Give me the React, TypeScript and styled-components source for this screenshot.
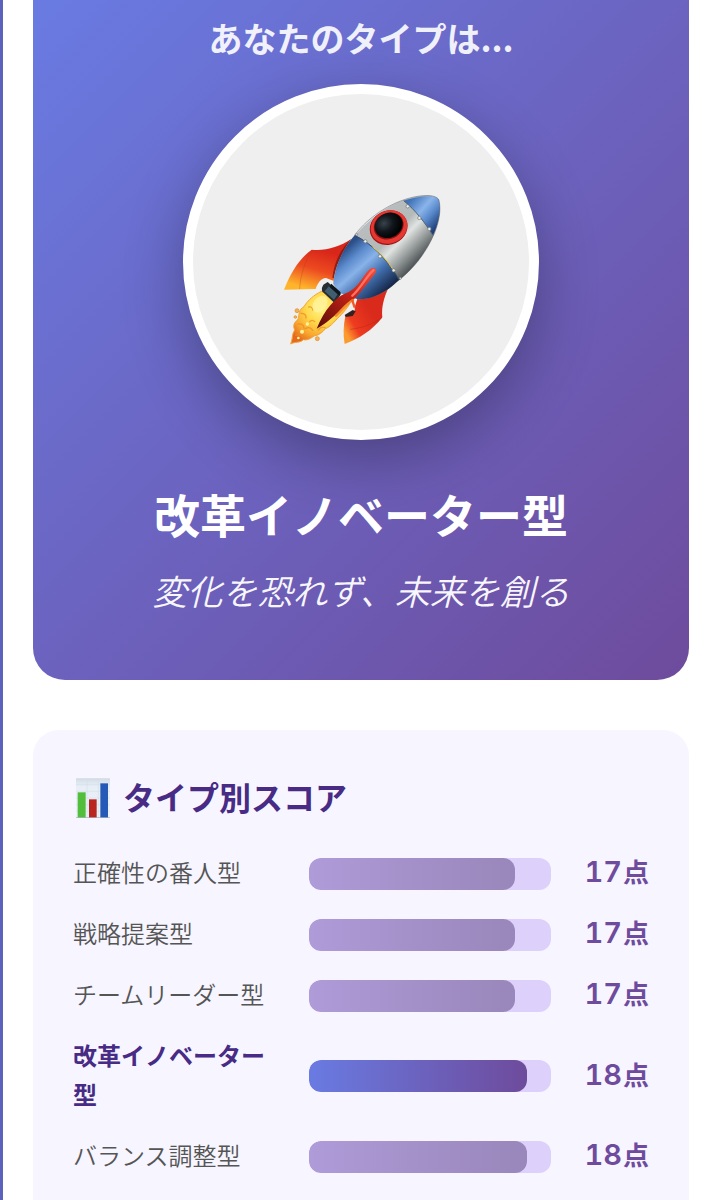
import React from "react";
import styled, { createGlobalStyle } from "styled-components";

const GlobalStyle = createGlobalStyle`
  *, *::before, *::after { box-sizing: border-box; }
  body {
    margin: 0;
    background: #5d62ba;
    font-family: "Noto Sans CJK JP", sans-serif;
  }
`;

const Page = styled.main`
  margin-left: 3px;
  min-height: 100vh;
  padding: 0 17px 0 30px;
  background: #fff;
  overflow: hidden;
`;

const Hero = styled.section`
  display: flex;
  flex-direction: column;
  align-items: center;
  padding: 14px 40px 64px;
  border-radius: 0 0 32px 32px;
  background: linear-gradient(135deg, #697be2 0%, #6e4b9c 100%);
  color: #fff;
  text-align: center;
`;

const Lead = styled.p`
  margin: 0 0 22px;
  font-size: 34px;
  line-height: 48px;
  font-weight: 700;
  opacity: 0.9;
`;

const Medallion = styled.div`
  display: grid;
  place-items: center;
  width: 356px;
  height: 356px;
  border: 10px solid #fff;
  border-radius: 50%;
  background: #efefef;
  box-shadow: 0 20px 60px rgba(0, 0, 0, 0.3);
`;

const TypeName = styled.h1`
  margin: 38px 0 16px;
  font-size: 46px;
  line-height: 70px;
  font-weight: 700;
`;

const Tagline = styled.p`
  margin: 0;
  font-size: 35px;
  line-height: 52px;
  font-weight: 350;
  font-style: italic;
  opacity: 0.95;
`;

const ScoreCard = styled.section`
  margin-top: 50px;
  padding: 40px 40px 48px;
  border-radius: 26px;
  background: #f7f5ff;
`;

const CardTitle = styled.h2`
  display: flex;
  align-items: center;
  gap: 10px;
  margin: 0 0 26px;
  color: #472b85;
  font-size: 32px;
  line-height: 52px;
  font-weight: 700;
`;

const TitleText = styled.span`
  padding-bottom: 4px;
`;

const ScoreList = styled.ul`
  display: flex;
  flex-direction: column;
  gap: 18px;
  margin: 0;
  padding: 0;
  list-style: none;
`;

const ScoreRow = styled.li`
  display: flex;
  align-items: center;
  gap: 24px;
  line-height: 39px;
`;

const Label = styled.span<{ $active?: boolean }>`
  flex: 0 0 212px;
  padding-bottom: 4px;
  font-size: 24px;
  font-weight: ${(p) => (p.$active ? 700 : 350)};
  color: ${(p) => (p.$active ? "#472b85" : "#555")};
`;

const Track = styled.div`
  flex: 1;
  height: 32px;
  border-radius: 12px;
  background: #ddd0fb;
  overflow: hidden;
`;

const Fill = styled.div<{ $active?: boolean }>`
  height: 100%;
  border-radius: 12px;
  background: ${(p) =>
    p.$active
      ? "linear-gradient(90deg, #697be2, #6e4b9c)"
      : "linear-gradient(90deg, #af9bd8, #9986ba)"};
`;

const Score = styled.span`
  display: flex;
  flex: 0 0 74px;
  justify-content: flex-end;
  align-items: baseline;
  gap: 1px;
  padding-bottom: 4px;
  color: #6e4b9c;
  font-size: 26px;
  line-height: 32px;
  font-weight: 700;
`;

const Digits = styled.span`
  font-family: Inter, "Noto Sans CJK JP", sans-serif;
  font-size: 29px;
  font-weight: 600;
  font-variant-numeric: tabular-nums;
`;

const Rocket = () => (
  <svg width="180" height="180" viewBox="3 -24 540 540" aria-hidden="true">
    <defs>
      <linearGradient id="hull" gradientUnits="userSpaceOnUse" x1="300" y1="85" x2="455" y2="235">
        <stop offset="0" stopColor="#7c8286" />
        <stop offset=".12" stopColor="#b9bdbf" />
        <stop offset=".48" stopColor="#b4b9b9" />
        <stop offset=".62" stopColor="#dfe3e1" />
        <stop offset=".8" stopColor="#9a9f9f" />
        <stop offset="1" stopColor="#4c5154" />
      </linearGradient>
      <linearGradient id="tail" gradientUnits="userSpaceOnUse" x1="215" y1="215" x2="330" y2="345">
        <stop offset="0" stopColor="#2b4f88" />
        <stop offset=".22" stopColor="#5d8cce" />
        <stop offset=".42" stopColor="#88b2e8" />
        <stop offset=".68" stopColor="#426fae" />
        <stop offset="1" stopColor="#172a4e" />
      </linearGradient>
      <linearGradient id="nose" gradientUnits="userSpaceOnUse" x1="430" y1="50" x2="515" y2="125">
        <stop offset="0" stopColor="#3f72b8" />
        <stop offset=".4" stopColor="#8ab4ea" />
        <stop offset=".65" stopColor="#5b8bcd" />
        <stop offset="1" stopColor="#1e3f7a" />
      </linearGradient>
      <linearGradient id="finLeft" gradientUnits="userSpaceOnUse" x1="160" y1="210" x2="125" y2="330">
        <stop offset="0" stopColor="#d8261a" />
        <stop offset=".5" stopColor="#ec4a20" />
        <stop offset="1" stopColor="#ffb52b" />
      </linearGradient>
      <linearGradient id="finRight" gradientUnits="userSpaceOnUse" x1="222" y1="450" x2="305" y2="400">
        <stop offset="0" stopColor="#fb9a2e" />
        <stop offset=".35" stopColor="#ee3c20" />
        <stop offset="1" stopColor="#d92a1b" />
      </linearGradient>
      <linearGradient id="finMid" gradientUnits="userSpaceOnUse" x1="310" y1="275" x2="145" y2="445">
        <stop offset="0" stopColor="#ef4736" />
        <stop offset=".4" stopColor="#c92317" />
        <stop offset="1" stopColor="#5a0d08" />
      </linearGradient>
      <radialGradient id="flame" gradientUnits="userSpaceOnUse" cx="155" cy="385" r="115">
        <stop offset="0" stopColor="#fff58a" />
        <stop offset=".4" stopColor="#ffd94a" />
        <stop offset=".75" stopColor="#f8a52e" />
        <stop offset="1" stopColor="#e5681c" />
      </radialGradient>
      <radialGradient id="glass" cx=".38" cy=".35" r=".65">
        <stop offset="0" stopColor="#39434c" />
        <stop offset=".5" stopColor="#10161b" />
        <stop offset="1" stopColor="#000" />
      </radialGradient>
    </defs>
    <path d="M154 334C132 346 115 358 102 380C86 388 88 402 84 418C72 428 68 436 74 450C65 462 69 475 62 492C76 484 90 490 100 479C112 482 123 475 132 468C148 466 158 456 166 446C184 440 196 420 214 404C228 388 240 374 244 360L205 360Z" fill="url(#flame)" stroke="#f3a53a" strokeWidth="3" />
    <g fill="none" stroke="#ec8a24" strokeWidth="4" strokeLinecap="round" opacity=".75">
      <path d="M93 400q16 0 15 14M84 432q16-3 18 12M106 446q14-8 22 5M77 466q14-6 22 5M119 425q8-8 15 0M145 450q8-12 20-7M116 381q12-2 12 9" />
    </g>
    <g fill="#fff3a0">
      <ellipse cx="150" cy="372" rx="19" ry="28" transform="rotate(38 150 372)" opacity=".75" />
      <circle cx="96" cy="455" r="6" /><circle cx="112" cy="432" r="5" /><circle cx="85" cy="474" r="4" />
    </g>
    <g fill="#f4b34f" stroke="#dc8b31" strokeWidth="2">
      <circle cx="81" cy="392" r="6" /><circle cx="76" cy="411" r="4" /><circle cx="142" cy="476" r="6" />
    </g>
    <path d="M244 177C207 201 168 213 125 209C84 239 62 281 42 329L137 327C143 309 153 295 168 294L194 304C196 260 214 216 244 177Z" fill="url(#finLeft)" />
    <path d="M125 211C105 245 91 285 89 327" fill="none" stroke="#bb3818" strokeWidth="2" opacity=".5" />
    <path d="M244 177C222 205 205 251 199 296L187 293C192 248 211 207 244 177Z" fill="#7e1711" opacity=".8" />
    <path d="M356 322C342 352 334 381 337 412C307 451 269 475 224 492C219 466 220 436 226 409C244 410 257 400 254 382L264 350Z" fill="url(#finRight)" />
    <path d="M336 413C309 432 277 444 240 448" fill="none" stroke="#b91f14" strokeWidth="2" opacity=".6" />
    <path d="M224 405L248 390L257 394L248 408L227 411Z" fill="#352120" />
    <path d="M190 311C194 244 238 179 285 135C332 88 391 57 449 48C476 44 503 47 507 61C514 91 507 127 492 163C466 223 424 273 378 308C342 342 307 356 264 358L207 338Z" fill="url(#hull)" />
    <path d="M190 311C195 256 219 206 254 166C306 191 353 239 387 299C348 337 308 358 264 358L207 338Z" fill="url(#tail)" />
    <path d="M401 62C440 48 503 41 507 61C514 91 507 127 489 166C464 127 437 91 401 62Z" fill="url(#nose)" />
    <path d="M401 62C437 91 464 127 489 166" fill="none" stroke="#526171" strokeWidth="3" />
    <path d="M254 166C306 191 353 239 387 299" fill="none" stroke="#394b62" strokeWidth="3" />
    <path d="M307 200Q343 228 370 270" fill="none" stroke="#e3c637" strokeWidth="3" />
    <path d="M254 166C294 110 373 58 449 48C480 44 503 48 507 61C514 91 507 127 492 163C466 223 424 273 387 299" fill="none" stroke="#454d56" strokeWidth="2" opacity=".65" />
    <ellipse cx="356" cy="143" rx="58" ry="51" transform="rotate(-25 356 143)" fill="#a51414" />
    <ellipse cx="357" cy="141" rx="56" ry="49" transform="rotate(-25 357 141)" fill="#e43832" />
    <ellipse cx="356" cy="138" rx="46" ry="39" transform="rotate(-25 356 138)" fill="#8c1010" />
    <ellipse cx="356" cy="136" rx="43" ry="37" transform="rotate(-25 356 136)" fill="url(#glass)" />
    <g fill="#eef0ee" stroke="#6c7376" strokeWidth="2">
      <circle cx="413" cy="79" r="5" /><circle cx="448" cy="114" r="5" /><circle cx="478" cy="147" r="5" />
      <circle cx="286" cy="184" r="5" /><circle cx="330" cy="229" r="5" /><circle cx="371" cy="271" r="5" />
      <circle cx="260" cy="163" r="3" /><circle cx="391" cy="295" r="3" />
    </g>
    <path d="M173 306L213 341L196 371L156 334Q153 324 160 314Z" fill="#262e34" />
    <path d="M177 318L203 342L192 359L164 334Z" fill="#415e70" />
    <path d="M184 311L212 337L208 347L178 320Z" fill="#10171c" />
    <path d="M318 269C310 259 299 267 291 276C270 304 255 332 224 341C196 353 164 387 140 446C180 426 213 385 250 360C271 338 294 308 314 282Q320 275 318 269Z" fill="url(#finMid)" />
    <path d="M311 270C290 287 273 325 247 347" fill="none" stroke="#ff7161" strokeWidth="7" strokeLinecap="round" />
    <path d="M249 360C226 374 214 392 198 407" fill="none" stroke="#f58b2c" strokeWidth="7" strokeLinecap="round" />
    <path d="M247 361L253 380" stroke="#ef5b28" strokeWidth="7" strokeLinecap="round" />
  </svg>
);

const ChartIcon = () => (
  <svg width="40" height="40" viewBox="0 0 120 120" aria-hidden="true">
    <defs>
      <linearGradient id="paper" x1="0" y1="0" x2="0" y2="1">
        <stop offset="0" stopColor="#d3dce6" />
        <stop offset=".2" stopColor="#e7eef6" />
        <stop offset="1" stopColor="#edf2fa" />
      </linearGradient>
    </defs>
    <path d="M9 1H111V120H9Z" fill="url(#paper)" />
    <path d="M9 2H111M9 20H111M9 40H111M9 60H111M9 80H111M9 100H111M42 2V120M76 2V120" stroke="#d6dfe8" strokeWidth="2" />
    <path d="M14 43H38V119H14Z" fill="#52be3b" />
    <path d="M48 64H71V119H48Z" fill="#b92520" />
    <path d="M82 16H105V119H82Z" fill="#2459b8" />
    <path d="M9 119H111" stroke="#98a4b2" strokeWidth="2" />
  </svg>
);

const scores = [
  { name: "正確性の番人型", points: 17 },
  { name: "戦略提案型", points: 17 },
  { name: "チームリーダー型", points: 17 },
  { name: "改革イノベーター型", points: 18, active: true },
  { name: "バランス調整型", points: 18 },
];

const MAX_POINTS = 20;

export default function App() {
  return (
    <>
      <GlobalStyle />
      <Page>
        <Hero>
          <Lead>あなたのタイプは...</Lead>
          <Medallion>
            <Rocket />
          </Medallion>
          <TypeName>改革イノベーター型</TypeName>
          <Tagline>変化を恐れず、未来を創る</Tagline>
        </Hero>
        <ScoreCard>
          <CardTitle>
            <ChartIcon />
            <TitleText>タイプ別スコア</TitleText>
          </CardTitle>
          <ScoreList>
            {scores.map((s) => (
              <ScoreRow key={s.name}>
                <Label $active={s.active}>{s.name}</Label>
                <Track>
                  <Fill $active={s.active} style={{ width: `${(s.points / MAX_POINTS) * 100}%` }} />
                </Track>
                <Score>
                  <Digits>{s.points}</Digits>点
                </Score>
              </ScoreRow>
            ))}
          </ScoreList>
        </ScoreCard>
      </Page>
    </>
  );
}
